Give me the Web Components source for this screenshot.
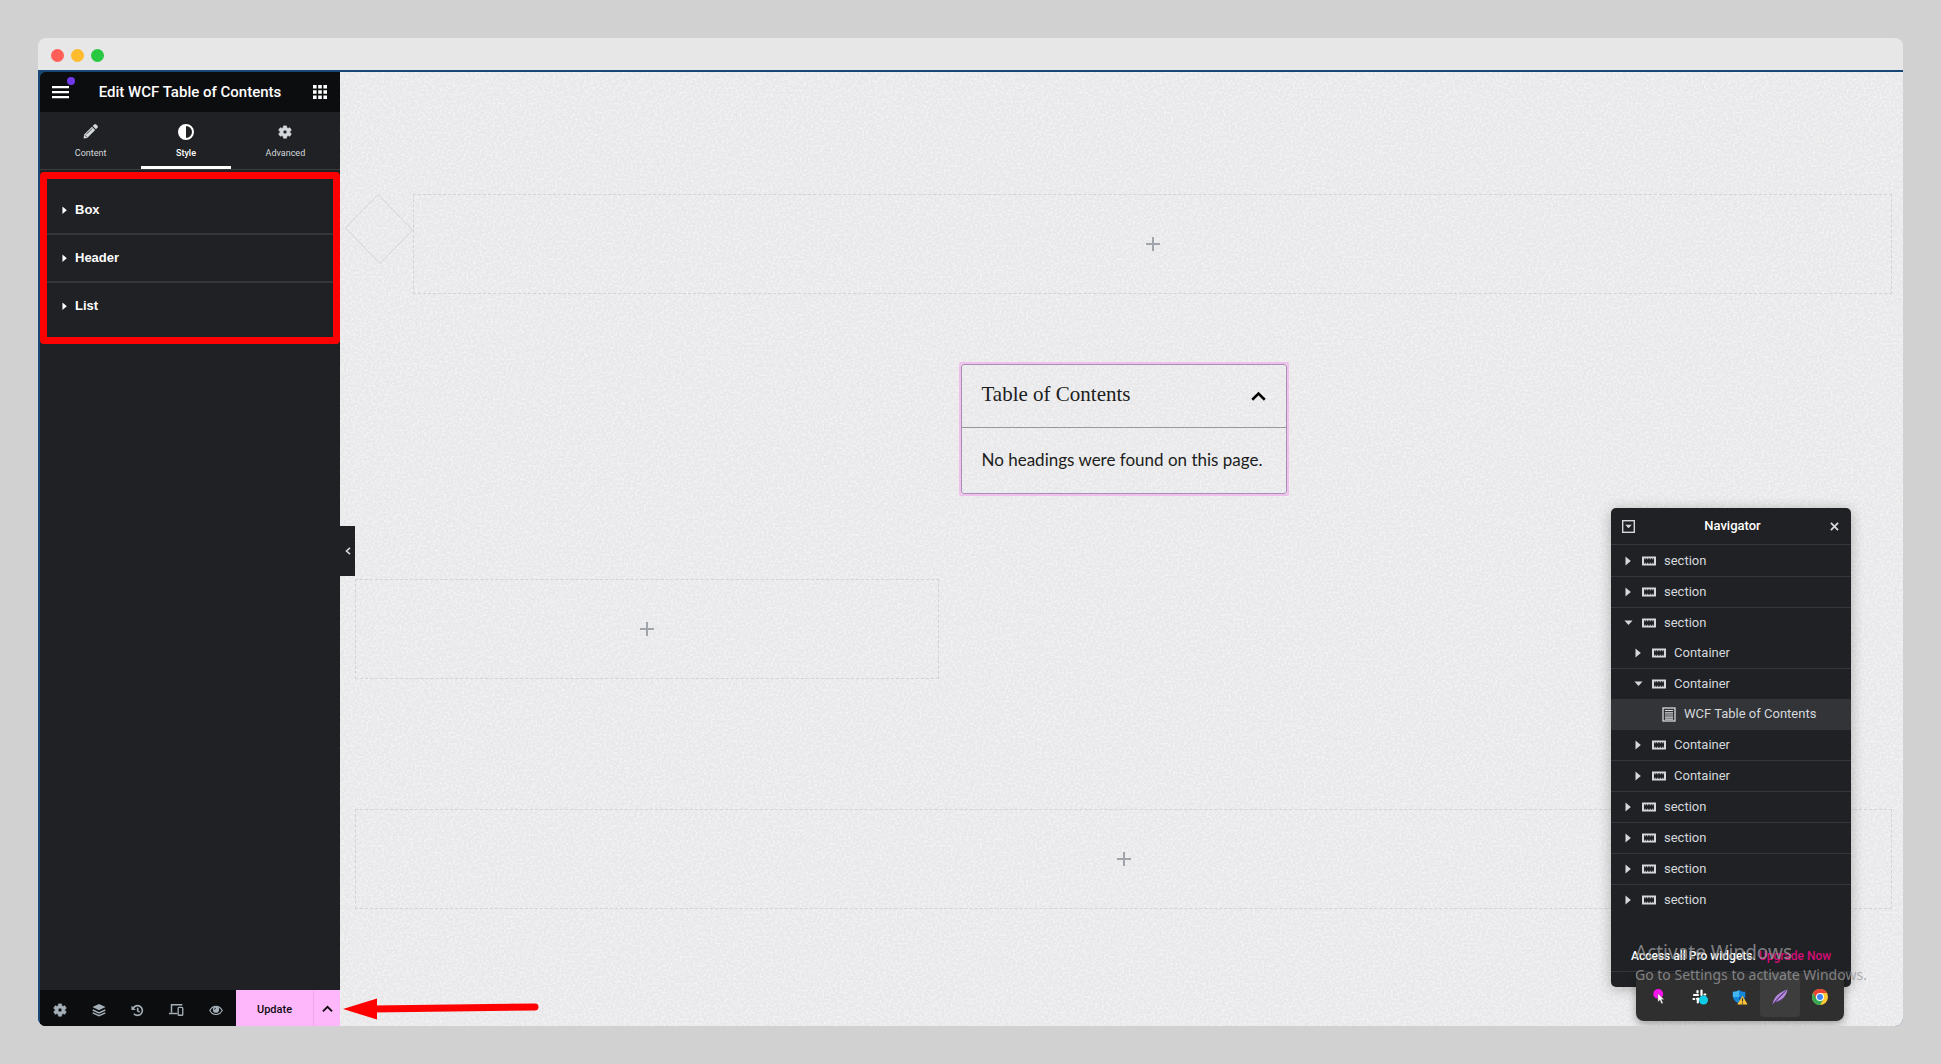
<!DOCTYPE html>
<html lang="en">
<head>
<meta charset="utf-8">
<title>Edit WCF Table of Contents</title>
<style>
html,body{margin:0;height:100%}
body{background:#d1d1d1;font-family:Roboto,"Liberation Sans",sans-serif;box-sizing:border-box;padding:38px;display:flex;flex-direction:column;overflow:hidden}
browser-window{flex:1}
</style>
</head>
<body>
<browser-window>
  <editor-panel slot="side"></editor-panel>
  <page-canvas slot="main"></page-canvas>
</browser-window>
<script>
const ICONS = {
  menu: ['0 0 17 14','<path fill="currentColor" d="M0 1h17v2.200H0zM0 6h17v2.200H0zM0 11h17v2.200H0z"/>'],
  grid: ['0 0 14 14','<path fill="currentColor" d="M0 0h3.600v3.600H0zM5.200 0h3.600v3.600H5.200zM10.400 0H14v3.600h-3.600zM0 5.200h3.600v3.600H0zM5.200 5.200h3.600v3.600H5.200zM10.400 5.200H14v3.600h-3.600zM0 10.400h3.600V14H0zM5.200 10.400h3.600V14H5.200zM10.400 10.400H14V14h-3.600z"/>'],
  pencil: ['0 0 16 16','<path fill="currentColor" d="M10.300 2.200 12 .6a1.500 1.500 0 0 1 2.100 0l1.300 1.300a1.500 1.500 0 0 1 0 2.100l-1.600 1.700zM9.500 3l3.500 3.500-8.500 8.500L.7 15.500 1 11.500z"/><path stroke="#1f2124" stroke-width=".8" d="m3.500 11 6.300-6.300M1.800 11.800l2.500 2.500"/>'],
  contrast: ['0 0 16 16','<circle cx="8" cy="8" r="7" fill="none" stroke="currentColor" stroke-width="2"/><path fill="currentColor" d="M8 1a7 7 0 0 0 0 14z"/>'],
  gear: ['0 0 16 16','<path fill="currentColor" stroke="currentColor" stroke-width=".8" stroke-linejoin="round" fill-rule="evenodd" d="M6.300 1h3.400l.3 2 1.500.9 2-.7 1.700 2.800-1.700 1.300v1.400l1.700 1.300-1.700 2.800-2-.7-1.500.9-.3 2H6.300l-.3-2-1.500-.9-2 .7L.8 10l1.700-1.300V7.300L.8 6l1.700-2.800 2 .7L6 3zM8 5.700a2.300 2.300 0 1 0 0 4.600 2.300 2.300 0 0 0 0-4.600z"/>'],
  layers: ['0 0 16 16','<path fill="currentColor" d="M8 1l7.500 3.600L8 8.200.5 4.600z"/><path fill="none" stroke="currentColor" stroke-width="1.700" d="M.8 8 8 11.300 15.200 8M.8 11.200 8 14.600l7.200-3.400"/>'],
  history: ['0 0 16 16','<path fill="none" stroke="currentColor" stroke-width="2" d="M2.600 5.500A6 6 0 1 1 3.500 12M8.200 4.500v4l2.400 1.500"/><path fill="currentColor" d="M.5 2v5.500H6z"/>'],
  devices: ['0 0 18 16','<path fill="none" stroke="currentColor" stroke-width="1.800" d="M3 11.500V2h13M0 12.500h10"/><rect x="11" y="5.200" width="5.500" height="9.500" rx="1" fill="none" stroke="currentColor" stroke-width="1.600"/>'],
  eye: ['0 0 18 14','<path fill="none" stroke="currentColor" stroke-width="1.600" d="M1 7c4-7 12-7 16 0-4 7-12 7-16 0z"/><circle cx="9" cy="6" r="4" fill="currentColor"/><path fill="none" stroke="#0c0d0e" d="M7 6a2 2 0 0 1 2-2"/>'],
  up: ['0 0 12 8','<path fill="none" stroke="currentColor" stroke-width="2" d="m1 7 5-5 5 5"/>'],
  left: ['0 0 6 8','<path fill="none" stroke="currentColor" stroke-width="1.600" d="M5 .8 1.500 4 5 7.200"/>'],
  plus: ['0 0 14 14','<path fill="none" stroke="currentColor" stroke-width="2" d="M7 0v14M0 7h14"/>'],
  right: ['0 0 6 10','<path fill="currentColor" d="M.5.500 5.800 5 .5 9.500z"/>'],
  down: ['0 0 10 6','<path fill="currentColor" d="M.5.500h9L5 5.500z"/>'],
  dock: ['0 0 14 14','<rect x=".75" y=".75" width="12.500" height="12.500" fill="none" stroke="currentColor" stroke-width="1.500"/><path fill="currentColor" d="M3.500 5h7L7 9z"/>'],
  close: ['0 0 10 10','<path fill="none" stroke="currentColor" stroke-width="2" d="m1 1 8 8M9 1 1 9"/>'],
  box: ['0 0 14 10','<path fill="currentColor" fill-rule="evenodd" d="M0 .5h14v9H0zM2 2.200v5.600h10V2.200z"/><path fill="currentColor" d="M2.600 2.200h1.200v1H2.600zM5 2.200h1.200v1H5zM7.700 2.200h1.200v1H7.700zM10.200 2.200h1.200v1h-1.200zM2.600 6.800h1.200v1H2.600zM5 6.800h1.200v1H5zM7.700 6.800h1.200v1H7.700zM10.200 6.800h1.200v1h-1.200z"/>'],
  list: ['0 0 14 15','<rect x="1" y="1" width="12" height="13" fill="none" stroke="currentColor" stroke-width="1.300"/><path stroke="currentColor" stroke-width="1.200" d="M3 3.500h8M3 5.800h8M3 8h8M3 10.200h8M3 12.200h8"/>'],
  cursor: ['0 0 18 18','<circle cx="7" cy="5.500" r="5.500" fill="#fb12f0"/><path fill="#fff" stroke="#444" stroke-width=".4" d="m6.500 5 .2 9.500 2.200-2 1.800 4 1.700-.8-1.800-3.800h3z"/>'],
  slack: ['0 0 16 16','<g stroke="#fff" stroke-width="2.200" stroke-linecap="round"><path d="M5.500 2v1.500M2 6h4M9.500 1.500v4.500M12.500 5.500h.8M1.500 10h.8M5.800 9.500v4M5 9.800h2"/></g><circle cx="11.500" cy="11" r="4.500" fill="#10cbe4"/>'],
  shield: ['0 0 18 18','<path fill="#1686d9" d="M8 1c2 1.600 4.500 2 7 2v5c0 4-3 7-7 8.500C4 15 1 12 1 8V3c2.500 0 5-.4 7-2z"/><path fill="#41b8f2" d="M8 1v8H1V3c2.500 0 5-.4 7-2z"/><path fill="#0a5ba9" d="M8 9h7c-.6 3.700-3.500 6.200-7 7.500z"/><path fill="#ffc437" d="m11.800 7.500 5.700 10H6z"/><path stroke="#333" stroke-width="1.300" d="M11.800 10.500v3.700M11.800 15.200v1.300"/>'],
  feather: ['0 0 16 16','<path fill="#b78be0" d="M.5 15.500C1.500 8 7 3.500 15.500.5 14.500 7 9.500 12 3 13z"/><path stroke="#65428a" d="M.5 15.500C5 10 9 6 14.500 1.500M5 13l6-3"/>'],
  chrome: ['0 0 16 16','<circle cx="8" cy="8" r="8" fill="#fcc934"/><path fill="#ea4335" d="M1.070 4A8 8 0 0 1 14.930 4H8L4.540 10z"/><path fill="#34a853" d="M1.070 4A8 8 0 0 0 8 16l3.460-6L8 8l-3.460 2z"/><circle cx="8" cy="8" r="4" fill="#fff"/><circle cx="8" cy="8" r="3" fill="#4285f4"/>']
};
const define = (name, render) => customElements.define(name, class extends HTMLElement {
  connectedCallback(){ if(!this.shadowRoot) this.attachShadow({mode:'open'}).innerHTML = render(this); }
});
const base = '*{box-sizing:border-box}button{font:inherit;color:inherit;background:none;border:0;padding:0;margin:0;display:flex;align-items:center;justify-content:center}a{color:inherit;text-decoration:none}';
const icon = (name,w=14) => `<ui-icon name="${name}" style="width:${w}px"></ui-icon>`;

define('ui-icon', el => {
  const [box,body] = ICONS[el.getAttribute('name')];
  return `<style>:host{display:block;flex:none}svg{display:block;width:100%}</style><svg viewBox="${box}" aria-hidden="true">${body}</svg>`;
});

define('browser-window', () => `<style>${base}
:host{display:flex;flex-direction:column;border-radius:8px;overflow:hidden;background:#e7e7e7;min-height:0}
.bar{height:32px;display:flex;align-items:center;gap:7px;padding:2px 0 0 13px}
.bar i{width:13px;height:13px;border-radius:50%}
.view{flex:1;display:flex;min-height:0;border:0 solid #174776;border-width:2px 0 0 2px;background:#174776}
</style><div class="bar"><i style="background:#ff5f57"></i><i style="background:#febb2e"></i><i style="background:#28c840"></i></div>
<div class="view"><slot name="side"></slot><slot name="main"></slot></div>`);

define('panel-tab', el => `<style>${base}
:host{display:block;flex:1 1 auto}
button{width:100%;height:57px;flex-direction:column;gap:7px;font-size:9px;line-height:12px;color:#d5d8dc;padding-top:4px;border-bottom:3px solid transparent}
.i{height:16px;display:flex;align-items:center}
:host([active]) button{color:#fff;border-color:#fff;font-weight:500}
</style><button><span class="i">${icon(el.getAttribute('icon'),+el.getAttribute('size')||14)}</span><slot></slot></button>`);

define('panel-section', () => `<style>${base}
:host{display:block;border-bottom:2px solid #34363a}:host(:last-of-type){border-color:transparent}
button{height:46px;width:100%;justify-content:flex-start;gap:8px;padding-left:15px;color:#fff;font:bold 13px/18px "Liberation Sans",sans-serif}
</style><button>${icon('right',5)}<slot></slot></button>`);

define('editor-panel', () => `<style>${base}
:host{display:flex;flex-direction:column;width:300px;flex:none;background:#1f2124;color:#fff;border-top-left-radius:6px;overflow:hidden}
header{height:40px;background:#0c0d0e;display:flex;align-items:center;justify-content:space-between;padding:0 13px 0 12px}
h1{margin:0;padding-right:2px;font-size:15px;line-height:20px;font-weight:500}
.menu{position:relative}.menu i{position:absolute;right:-6px;top:-8px;width:8px;height:8px;border-radius:50%;background:#6f38e8}
nav{display:flex;height:58px;border-bottom:1px solid #3a3c40}
.sections{margin-top:2px;border:7px solid #f00;border-radius:4px;padding:8px 0 6px}
footer{margin-top:auto;height:36px;background:#0c0d0e;display:flex}
.tools{flex:1;display:flex;align-items:center;justify-content:space-around;color:#a4afb7;padding:4px 1px 0 0}
.update{display:flex;background:#ffb7fb;color:#0c0d0e;font-size:11px;font-weight:500;width:104px}
.update button{padding-top:2px}
.update button:first-child{flex:1}.update button:last-child{width:27px;border-left:1px solid #efa5eb}
</style>
<header><button class="menu" aria-label="Menu">${icon('menu',17)}<i></i></button><h1>Edit WCF Table of Contents</h1><button aria-label="Widgets">${icon('grid',14)}</button></header>
<nav><panel-tab icon="pencil" size="15">Content</panel-tab><panel-tab icon="contrast" size="16" active>Style</panel-tab><panel-tab icon="gear">Advanced</panel-tab></nav>
<div class="sections"><panel-section>Box</panel-section><panel-section>Header</panel-section><panel-section>List</panel-section></div>
<footer><div class="tools">${[['gear',14],['layers',14],['history',13],['devices',15],['eye',14]].map(([n,w])=>`<button aria-label="${n}">${icon(n,w)}</button>`).join('')}</div>
<div class="update"><button>Update</button><button aria-label="Save options">${icon('up',11)}</button></div></footer>`);

define('drop-zone', () => `<style>${base}
:host{display:flex;height:100px;border:1px dashed #d2d3d5;color:#a0a4ab;align-items:center;justify-content:center}
</style><button aria-label="Add widget">${icon('plus',14)}</button>`);

define('toc-card', () => `<style>${base}
:host{display:block;width:330px;border:2px solid #efc0ec;border-radius:2px;color:#1c1d20}
.in{border:1px solid #a98fb5;border-radius:3px}
header{height:63px;border-bottom:1px solid #97989b;display:flex;align-items:center;justify-content:space-between;padding:0 20px 4px 20px}
h2{margin:0;font:400 21px/28px "Liberation Serif",serif}
button{color:#000;padding-top:4px}
p{margin:0;padding:20px 20px 21px;font:400 17px/24px Lato,sans-serif;white-space:nowrap}
</style><div class="in"><header><h2>Table of Contents</h2><button aria-label="Collapse">${icon('up',15)}</button></header><p>No headings were found on this page.</p></div>`);

define('nav-row', el => {
  const leaf = el.hasAttribute('leaf'), open = el.hasAttribute('open');
  return `<style>${base}
:host{display:block;height:31px;border-bottom:1px solid #34373b}
:host([open]){height:30px;border:0}:host([leaf]){background:#333438;border-color:#333438}:host(:last-of-type){border-color:transparent}
button{width:100%;height:30px;justify-content:flex-start;font-size:13px;line-height:20px;color:#d5d8dc;padding-left:${12+10*(+el.getAttribute('level')||0)}px}
.a{width:10px;display:flex;justify-content:center}.b{margin:0 8px 0 9px}
:host([leaf]) .a{display:none}:host([leaf]) .b{margin-left:19px}
</style><button><span class="a">${open?icon('down',9):icon('right',6)}</span><span class="b">${icon(leaf?'list':'box',14)}</span><slot></slot></button>`;
});

define('tree-navigator', () => `<style>${base}
:host{display:flex;flex-direction:column;width:240px;height:479px;background:#1f2124;border-radius:5px;overflow:hidden;box-shadow:0 2px 14px #0004;color:#d5d8dc}
header{height:37px;display:flex;align-items:center;justify-content:space-between;padding:0 12px 0 11px;border-bottom:1px solid #34373b}
h2{margin:0;color:#fff;font-size:13px;line-height:18px;font-weight:500}
nav{display:block;padding-top:1px}
footer{margin-top:auto;height:40px}
p{margin:0;padding:0 20px 6px;font-size:12px;line-height:18px;font-weight:500;color:#fff;border-bottom:1px solid #34373b;display:flex;gap:3px;white-space:nowrap}
p a{color:#d30c78}
</style><header><button aria-label="Dock">${icon('dock',13)}</button><h2>Navigator</h2><button aria-label="Close">${icon('close',9)}</button></header>
<nav><nav-row>section</nav-row><nav-row>section</nav-row><nav-row open>section</nav-row>
<nav-row level="1">Container</nav-row><nav-row level="1" open>Container</nav-row><nav-row level="2" leaf>WCF Table of Contents</nav-row><nav-row level="1">Container</nav-row><nav-row level="1">Container</nav-row>
<nav-row>section</nav-row><nav-row>section</nav-row><nav-row>section</nav-row><nav-row>section</nav-row></nav>
<footer><p>Access all Pro widgets. <a href="#">Upgrade Now</a></p></footer>`);

define('system-tray', () => `<style>${base}
:host{display:flex;width:208px;height:48px;background:#2f2f30;border-radius:0 0 8px 8px;padding:0 4px 4px;box-shadow:0 3px 8px #0005}
button{flex:1;border-radius:4px;padding-top:4px}.on{background:#3d3d3e}
</style>${['cursor','slack','shield','feather','chrome'].map(n=>`<button aria-label="${n}"${n=='feather'?' class="on"':''}>${icon(n,16)}</button>`).join('')}`);

define('page-canvas', () => `<style>${base}
:host{display:block;flex:1;min-width:0;position:relative;background:#e8e8ea}
.grain{position:absolute;inset:0;width:100%;height:100%;opacity:.45}
.page{position:relative;padding:122px 11px 0 15px}
.row{display:flex}.row drop-zone{flex:1}
.diamond{width:68px;height:70px;margin-left:-10px;flex:none}
toc-card{margin:68px auto 0}
.half{margin-top:83px}
.half drop-zone{width:38%}
.last{margin-top:130px}
.fold{position:absolute;left:0;top:454px;width:15px;height:50px;background:#1f2124;color:#d5d8dc}
.arrow{position:absolute;left:2px;bottom:6px;width:198px}
.float{position:absolute;right:52px;bottom:39px}
system-tray{position:absolute;right:59px;bottom:5px}
.mark{position:absolute;right:32px;bottom:40px;width:236px;color:#999a9ccc;font:400 14px/22px "Noto Sans","Open Sans",sans-serif;white-space:nowrap;pointer-events:none}
.mark b{display:block;font-weight:400;font-size:19px;line-height:24px}
</style>
<svg class="grain" aria-hidden="true"><filter id="g"><feTurbulence type="fractalNoise" baseFrequency=".45" numOctaves="2"/><feColorMatrix values="0 0 0 0 1  0 0 0 0 1  0 0 0 0 1  3 0 0 0 -1.200"/></filter><rect width="100%" height="100%" filter="url(#g)"/></svg>
<div class="page"><div class="row"><svg class="diamond" viewBox="0 0 68 70" aria-hidden="true"><path fill="none" stroke="#d2d3d5" d="M33 .5 67.500 36 35 69.500.5 34z"/></svg><drop-zone></drop-zone></div>
<toc-card></toc-card><div class="half"><drop-zone></drop-zone></div><drop-zone class="last"></drop-zone></div>
<button class="fold" aria-label="Hide panel">${icon('left',6)}</button>
<svg class="arrow" viewBox="0 0 198 22" aria-hidden="true"><path fill="#f00" d="M1 11 35 .5v21z"/><path stroke="#f00" stroke-width="7" stroke-linecap="round" d="M30 11 193 9"/></svg>
<tree-navigator class="float"></tree-navigator><system-tray></system-tray>
<div class="mark"><b>Activate Windows</b>Go to Settings to activate Windows.</div>`);
</script>
</body>
</html>
